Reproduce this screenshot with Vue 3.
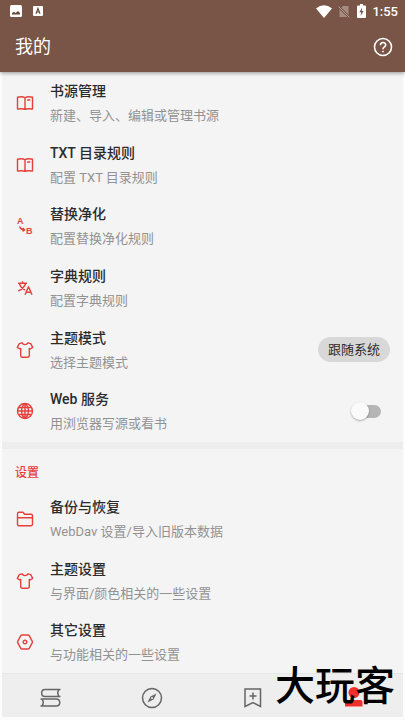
<script setup>
import { ref } from 'vue'

const webService = ref(false)
const themeMode = ref('跟随系统')

const general = [
  { icon: 'book', title: '书源管理', note: '新建、导入、编辑或管理书源' },
  { icon: 'book', title: 'TXT 目录规则', note: '配置 TXT 目录规则' },
  { icon: 'replace', title: '替换净化', note: '配置替换净化规则' },
  { icon: 'translate', title: '字典规则', note: '配置字典规则' },
  { icon: 'shirt', title: '主题模式', note: '选择主题模式', control: 'mode' },
  { icon: 'globe', title: 'Web 服务', note: '用浏览器写源或看书', control: 'switch' },
]
const settings = [
  { icon: 'folder', title: '备份与恢复', note: 'WebDav 设置/导入旧版本数据' },
  { icon: 'shirt', title: '主题设置', note: '与界面/颜色相关的一些设置' },
  { icon: 'hex', title: '其它设置', note: '与功能相关的一些设置' },
]
const groups = [
  { key: 'general', items: general },
  { key: 'settings', label: '设置', items: settings },
]
const icons = {
  book: 'M1.500 3.200C5 2.500 7.500 2.700 9 3.800C10.500 2.700 13 2.500 16.500 3.200V15C13 14.500 10.500 14.600 9 15.300C7.500 14.600 5 14.500 1.500 15ZM9 3.800V15.300M11.200 6.200L14.300 5.800',
  shirt: 'M6 1.800C7 4.200 11 4.200 12 1.800L14.700 2.600L16.700 6.400L14.200 8L13.300 7.400V14.800Q13.300 16.200 12 16.200H6Q4.700 16.200 4.700 14.800V7.400L3.800 8L1.300 6.400L3.300 2.600Z',
  globe: 'M9 1.500A7.500 7.500 0 1 1 9 16.500A7.500 7.500 0 1 1 9 1.500ZM9 1.500C4.500 5 4.500 13 9 16.500C13.500 13 13.500 5 9 1.500M9 2V16M2 9H16M3 5.500H15M3 12.500H15',
  folder: 'M1.500 14.300V3.700Q1.500 2.300 2.900 2.300H7L8.600 4.300H15.100Q16.500 4.300 16.500 5.700V14.300Q16.500 15.700 15.100 15.700H2.900Q1.500 15.700 1.500 14.300ZM2 7.700H16',
  hex: 'M6 2H12Q12.800 2 13.200 2.700L16.300 8.300Q16.700 9 16.300 9.700L13.200 15.300Q12.800 16 12 16H6Q5.200 16 4.800 15.300L1.700 9.700Q1.300 9 1.700 8.300L4.800 2.700Q5.200 2 6 2ZM9 7.200A1.800 1.800 0 1 1 9 10.800A1.800 1.800 0 1 1 9 7.200Z',
  translate: 'M2 4.300H11M6.500 2.300V4.300M3.300 4.300C4.200 7.500 6 9.500 9 11M9.700 4.300C8.700 7.500 6 10.500 2.300 12M9 15.800L12.500 7.800L16 15.800M10.200 13.200H14.800',
}
</script>

<template>
  <div class="app">
    <header class="header">
      <div class="status">
        <svg class="s-icon" viewBox="0 0 12 12" aria-hidden="true">
          <rect width="12" height="12" rx="1.500" fill="#fff" />
          <path d="M2 9.500V8L4 6.800L5.500 8L8 6L10 8V9.500Z" fill="#6b493d" />
        </svg>
        <svg class="s-icon small" viewBox="0 0 10 10" aria-hidden="true">
          <rect width="10" height="10" rx="1" fill="#fff" />
          <path d="M3 7.800L5 2.500L7 7.800M3.800 6H6.200" fill="none" stroke="#6b493d" stroke-width="1.200" />
        </svg>
        <span class="spacer"></span>
        <svg class="wifi" viewBox="0 0 16 13" aria-hidden="true"><path d="M0 3.500Q8-3 16 3.500L8 13Z" fill="#fff" /></svg>
        <svg class="sim" viewBox="0 0 12 13" aria-hidden="true">
          <path d="M5 1H10.500V12H1.500V4.500Z" fill="#a48c82" />
          <path d="M0 1L12 13" stroke="#795548" stroke-width="2.400" />
          <path d="M.5 1.500L11.500 12.500" stroke="#b09a92" stroke-width="1" />
        </svg>
        <svg class="battery" viewBox="0 0 9 14" aria-hidden="true">
          <path d="M3 0H6V1.500H8Q9 1.500 9 2.500V13Q9 14 8 14H1Q0 14 0 13V2.500Q0 1.500 1 1.500H3Z" fill="#fff" />
          <path d="M5.300 3.500L2.300 8.300H4.200L3.600 12L6.700 7H4.800Z" fill="#795548" />
        </svg>
        <time>1:55</time>
      </div>
      <div class="toolbar">
        <h1>我的</h1>
        <button class="help" type="button" aria-label="帮助">
          <svg viewBox="0 0 20 20" fill="none" stroke="#fff" stroke-width="1.600">
            <circle cx="10" cy="10" r="8.500" />
            <path d="M7.400 8.200C7.400 4.600 12.700 4.700 12.700 8C12.700 9.900 10 10 10 12.200M10 13.700V15.300" />
          </svg>
        </button>
      </div>
    </header>

    <main class="content">
      <section v-for="g in groups" :key="g.key" :class="['group', g.key]">
        <h2 v-if="g.label">{{ g.label }}</h2>
        <div v-for="item in g.items" :key="item.title" class="row">
          <svg class="icon" viewBox="0 0 18 18" aria-hidden="true">
            <g v-if="item.icon === 'replace'">
              <text x="1" y="7" class="letter">A</text>
              <text x="10" y="16.500" class="letter">B</text>
              <path d="M3.500 9.500Q4.500 12.600 8 12.800M6.700 11L8.700 12.900L6.500 14.300" class="line" />
            </g>
            <path v-else :d="icons[item.icon]" class="line" />
          </svg>
          <div class="text">
            <h3>{{ item.title }}</h3>
            <p>{{ item.note }}</p>
          </div>
          <select v-if="item.control === 'mode'" v-model="themeMode" class="mode" :aria-label="item.title">
            <option>跟随系统</option>
            <option>亮色主题</option>
            <option>暗色主题</option>
          </select>
          <input v-if="item.control === 'switch'" v-model="webService" class="switch" type="checkbox" role="switch" :aria-label="item.title" />
        </div>
      </section>
    </main>

    <nav class="nav">
      <a href="#shelf" aria-label="书架">
        <svg viewBox="0 0 22 22" class="nav-line">
          <path d="M19.500 2.500H4C-.5 2.500 -.5 9.500 4 9.500H19.500M18 2.500Q15.500 6 18 9.500M-.5 12H15C20 12 20 19 15 19H-.5M1 12Q3.500 15.500 1 19" />
        </svg>
      </a>
      <a href="#explore" aria-label="发现">
        <svg viewBox="0 0 22 22" class="nav-line">
          <circle cx="11" cy="11" r="9.500" />
          <path d="M15.500 6.500L12.500 12.500L6.500 15.500L9.500 9.500Z" fill="#666" stroke="none" />
          <circle cx="11" cy="11" r="1" fill="#eee" stroke="none" />
        </svg>
      </a>
      <a href="#rss" aria-label="订阅">
        <svg viewBox="0 0 22 22" class="nav-line">
          <path d="M3 2H18.500V19.500L11 15.500L3 19.500ZM11 5.500V12.500M7.500 9H14.500" />
        </svg>
      </a>
      <a href="#mine" aria-label="我的">
        <svg viewBox="0 0 22 22" fill="#f1302b">
          <circle cx="12" cy="5.500" r="5.500" />
          <path d="M3 19.500V15Q3 13 5 13H18.500Q20.500 13 20.500 15V19.500Z" />
        </svg>
      </a>
      <span class="watermark">大玩客</span>
    </nav>
  </div>
</template>

<style>
body {
  background: #fcfcfc;
}
</style>

<style scoped>
.app {
  display: flex;
  flex-direction: column;
  min-height: 100vh;
  box-sizing: border-box;
  padding-bottom: 3px;
  font-family: Roboto, "Noto Sans CJK SC", sans-serif;
}
h1, h2, h3, p {
  margin: 0;
}
.header {
  position: relative;
  background: #795548;
  color: #fff;
  box-shadow: 0 1px 4px rgba(0, 0, 0, 0.4);
}
.status {
  display: flex;
  align-items: center;
  height: 22px;
  padding: 0 7px 0 10px;
}
.s-icon {
  width: 12px;
  height: 12px;
}
.small {
  width: 10px;
  height: 10px;
  margin-left: 11px;
}
.spacer {
  flex: 1;
}
.wifi {
  width: 16px;
  height: 13px;
}
.sim {
  width: 12px;
  height: 13px;
  margin-left: 6px;
}
.battery {
  width: 9px;
  height: 14px;
  margin-left: 7px;
}
time {
  margin-left: 6px;
  font-size: 13px;
  font-weight: 500;
}
.toolbar {
  display: flex;
  align-items: center;
  justify-content: space-between;
  height: 50px;
  padding: 0 12px 0 15px;
}
h1 {
  font-size: 18px;
  line-height: 24px;
  font-weight: 400;
}
.help {
  display: flex;
  padding: 0;
  border: 0;
  background: none;
  cursor: pointer;
}
.help svg {
  width: 20px;
  height: 20px;
}
.content {
  display: flex;
  flex: 1;
  flex-direction: column;
  margin: 0 2px;
  background: #f4f4f4;
}
.group {
  display: flex;
  flex-direction: column;
}
.general {
  flex: 6 0 auto;
  border-bottom: 7px solid #ededed;
}
.settings {
  flex: 3 0 auto;
}
h2 {
  padding: 15px 13px 6px;
  font-size: 12px;
  line-height: 18px;
  font-weight: 500;
  color: #e5403c;
}
.row {
  display: flex;
  flex: 1 0 60px;
  align-items: center;
  box-sizing: border-box;
  padding: 0 13px 0 14px;
}
.icon {
  flex: none;
  width: 18px;
  height: 18px;
}
.line {
  fill: none;
  stroke: #e5403c;
  stroke-width: 1.400;
  stroke-linejoin: round;
}
.letter {
  fill: #e5403c;
  font-family: "Liberation Sans", sans-serif;
  font-size: 9px;
  font-weight: 700;
}
.text {
  flex: 1;
  padding: 2px 0 0 16px;
}
h3 {
  font-size: 14px;
  line-height: 24px;
  font-weight: 500;
  color: #2b2b2b;
}
p {
  font-size: 13px;
  line-height: 26px;
  color: #929292;
}
.mode {
  appearance: none;
  width: 72px;
  height: 25px;
  padding: 0;
  border: 0;
  border-radius: 13px;
  background: #d8d8d8;
  color: #2b2b2b;
  font-family: inherit;
  font-size: 13px;
  text-align: center;
  text-align-last: center;
}
.switch {
  appearance: none;
  position: relative;
  width: 26px;
  height: 13px;
  margin: 0 9px 0 0;
  border-radius: 7px;
  background: #b5b5b5;
}
.switch::before {
  content: "";
  position: absolute;
  top: -3px;
  left: -4px;
  width: 18px;
  height: 18px;
  border-radius: 50%;
  background: #fafafa;
  box-shadow: 0 1px 2px rgba(0, 0, 0, 0.3);
}
.switch:checked::before {
  left: 12px;
}
.nav {
  position: relative;
  display: flex;
  align-items: center;
  height: 44px;
  margin: 0 2px;
  box-sizing: border-box;
  border-top: 1px solid #e6e6e6;
  background: #eee;
}
.nav a {
  display: flex;
  flex: 1;
  justify-content: center;
  padding-top: 4px;
}
.nav svg {
  width: 22px;
  height: 22px;
  overflow: visible;
}
.nav-line {
  fill: none;
  stroke: #666;
  stroke-width: 1.500;
}
.watermark {
  position: absolute;
  right: 8px;
  bottom: 10px;
  font-size: 40px;
  line-height: 40px;
  font-weight: 500;
  color: #000;
  pointer-events: none;
}
</style>
